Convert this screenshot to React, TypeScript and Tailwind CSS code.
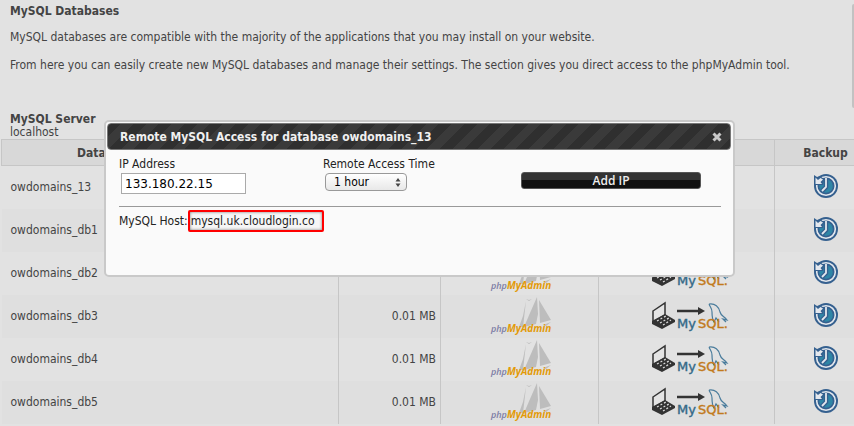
import { clsx } from "clsx";

const rows = [
  { name: "owdomains_13", size: "0.01 MB" },
  { name: "owdomains_db1", size: "0.01 MB" },
  { name: "owdomains_db2", size: "0.01 MB" },
  { name: "owdomains_db3", size: "0.01 MB" },
  { name: "owdomains_db4", size: "0.01 MB" },
  { name: "owdomains_db5", size: "0.01 MB" },
];

function PhpMyAdminLogo() {
  return (
    <svg width="64" height="40" viewBox="0 0 64 40" aria-label="phpMyAdmin">
      <g fill="#bdbdbd">
        <path d="M38 5 L35 20 L31 31 L35 31 Z" />
        <path d="M49 1 L50 18 L48 28 L36 31 L42 17 Z" />
        <path d="M51 4 L63 24 L52 27 Z" />
        <path d="M38 3l3 1 3-1-3 2z M55 29l8-3-5 4z" />
      </g>
      <text x="3" y="36" fontSize="9" fontStyle="italic" fontWeight="600" fontFamily="Open Sans, sans-serif" fill="#7c7ca4">
        php
      </text>
      <text x="19" y="36" fontSize="10" fontStyle="italic" fontWeight="700" fontFamily="Open Sans, sans-serif" fill="#e39a08">
        MyAdmin
      </text>
    </svg>
  );
}

function RemoteLogo() {
  return (
    <svg width="74" height="30" viewBox="0 0 74 30" className="overflow-visible" aria-label="Remote MySQL">
      <path d="M3 10 L15 2 V14 L3 21 Z" fill="#e4e4e4" stroke="#333" strokeWidth="1.500" />
      <path d="M2 20 L15 13 L25 19 V21 L12 28 L2 23 Z" fill="#333" />
      <path d="M7 20l9-5M10 22l9-5M13 24l8-5" stroke="#ddd" strokeWidth="1.200" strokeDasharray="2 2" />
      <path d="M27 10H49" stroke="#333" strokeWidth="2.500" />
      <path d="M48 6L55 10L48 14Z" fill="#333" />
      <path
        d="M59 3c6-1 10 3 11 8 1 4 4 4 7 8l-4-1 3 3M59 3c1 3 3 4 3 8s0 7 2 10l2-4 3 4"
        fill="none"
        stroke="#4a7c9c"
        strokeWidth="1.200"
      />
      <g fontSize="13" fontFamily="DejaVu Sans, sans-serif" strokeWidth="0.400">
        <text x="27" y="27" fill="#356a88" stroke="#356a88">
          My
        </text>
        <text x="48" y="27" fill="#c27a1c" stroke="#c27a1c">
          SQL.
        </text>
      </g>
    </svg>
  );
}

function BackupIcon() {
  return (
    <svg width="24" height="24" viewBox="0 0 24 24" aria-hidden="true">
      <circle cx="12" cy="12" r="12" fill="#35608f" />
      <circle cx="12" cy="12" r="9.300" fill="none" stroke="#e4e8ee" strokeWidth="1.600" />
      <circle cx="12" cy="12" r="6.800" fill="#2f86a6" />
      <path d="M12 4V13L8 17" fill="none" stroke="#35608f" strokeWidth="4.500" />
      <path d="M12 4V13L8 17" fill="none" stroke="#e4e8ee" strokeWidth="1.800" />
      <path d="M0 1L3 3L6 2L10 5L9 11H0Z" fill="#35608f" />
      <path d="M1.500 3.500V10H8L6.500 8L9 5.500L6.500 4L4 6Z" fill="#e4e8ee" />
    </svg>
  );
}

function RemoteAccessDialog() {
  return (
    <div
      role="dialog"
      aria-labelledby="dialog-title"
      className="absolute top-[120px] left-[104px] w-[631px] h-[157px] rounded-[5px] border-2 border-[#c9c9c9] bg-[#fafafa] text-[#222]"
    >
      <div className="mt-px mr-[2px] ml-px flex h-[27px] items-center justify-between rounded border border-[#777] bg-[repeating-linear-gradient(135deg,#2f2f2f_0px,#2f2f2f_9px,#3a3a3a_9px,#3a3a3a_18px)] pr-2 pl-3">
        <h2 id="dialog-title" className="font-bold text-[#f0f0f0]">
          Remote MySQL Access for database owdomains_13
        </h2>
        <button type="button" aria-label="Close">
          <svg width="10" height="10" viewBox="0 0 10 10">
            <path d="M1.500 1.500L8.500 8.500M8.500 1.500L1.500 8.500" stroke="#c8c8c8" strokeWidth="3" />
          </svg>
        </button>
      </div>

      <form className="pt-[6px] pr-3 pl-[13px]">
        <div className="flex border-b border-[#999] pb-3">
          <div className="w-[204px]">
            <label htmlFor="ip" className="block leading-4">
              IP Address
            </label>
            <input
              id="ip"
              type="text"
              defaultValue="133.180.22.15"
              className="mt-px ml-[2px] block h-[21px] w-[125px] border border-[#aaa] bg-white px-[3px] font-['DejaVu_Sans',sans-serif] text-[12px] text-black"
            />
          </div>
          <div className="flex-1">
            <label htmlFor="time" className="block leading-4">
              Remote Access Time
            </label>
            <span className="relative mt-px ml-[2px] block w-[82px]">
              <select
                id="time"
                className="block h-[18px] w-full appearance-none rounded border border-[#999] bg-linear-to-b from-white to-[#e8e8e8] pl-2 text-[12px] text-black"
              >
                <option>1 hour</option>
              </select>
              <svg width="6" height="9" viewBox="0 0 6 9" className="pointer-events-none absolute top-[5px] right-[6px]">
                <path d="M3 0L5.500 3.500H.5ZM3 9L5.500 5.500H.5Z" fill="#444" />
              </svg>
            </span>
          </div>
          <button
            type="button"
            className="mt-4 mr-5 h-[17px] w-[180px] rounded-[3px] border border-[#555] bg-linear-to-b from-[#333] from-50% to-[#111] to-50% font-['Open_Sans',sans-serif] leading-[14px] font-semibold text-[#eee]"
          >
            Add IP
          </button>
        </div>
        <div className="mt-[3px] flex items-center">
          <label htmlFor="host">MySQL Host:</label>
          <input
            id="host"
            type="text"
            readOnly
            defaultValue="mysql.uk.cloudlogin.co"
            className="h-[22px] w-[136px] rounded-xs border-2 border-[#f00] bg-[#f6f6f6] px-px shadow-[inset_0_0_3px_#777]"
          />
        </div>
      </form>
    </div>
  );
}

export default function App() {
  return (
    <main className="relative h-screen overflow-hidden bg-[#e2e2e2] font-['DejaVu_Sans_Condensed','DejaVu_Sans',sans-serif] text-[12px] leading-[14px] text-[#444]">
      <section className="px-[10px] pt-1">
        <h1 className="font-bold">MySQL Databases</h1>
        <p className="mt-3">
          MySQL databases are compatible with the majority of the applications that you may install on your website.
        </p>
        <p className="mt-[14px]">
          From here you can easily create new MySQL databases and manage their settings. The section gives you direct
          access to the phpMyAdmin tool.
        </p>
        <h2 className="mt-10 font-bold">MySQL Server</h2>
        <p className="leading-[13px]">localhost</p>
      </section>

      <table className="ml-px w-[calc(100%+22px)] table-fixed border-collapse">
        <colgroup>
          <col />
          <col className="w-[102px]" />
          <col className="w-[158px]" />
          <col className="w-[176px]" />
          <col className="w-[102px]" />
        </colgroup>
        <thead>
          <tr className="h-[26px] bg-[#d8d8d8]">
            <th className="border border-[#c6c6c6] pl-[75px] text-left">Data</th>
            <th className="border border-[#c6c6c6]" aria-label="Size" />
            <th className="border border-[#c6c6c6]" aria-label="phpMyAdmin" />
            <th className="border border-[#c6c6c6]" aria-label="Remote Access" />
            <th className="border border-[#c6c6c6]">Backup</th>
          </tr>
        </thead>
        <tbody>
          {rows.map((row, index) => (
            <tr key={row.name} className={clsx("h-[43px]", index % 2 === 0 ? "bg-[#e2e2e2]" : "bg-[#dfdfdf]")}>
              <td className="border-r border-[#c6c6c6] pl-[9px]">{row.name}</td>
              {/* the first rows sit behind the dialog */}
              <td className="border-r border-[#c6c6c6] pr-1 text-right">{index > 2 && row.size}</td>
              <td className="border-r border-[#c6c6c6]">
                <a href="#phpmyadmin" className="flex justify-center">
                  <PhpMyAdminLogo />
                </a>
              </td>
              <td className="border-r border-[#c6c6c6]">
                <a href="#remote" className="flex justify-center">
                  <RemoteLogo />
                </a>
              </td>
              <td className="pb-[3px]">
                <button type="button" aria-label={`Backup ${row.name}`} className="mx-auto block">
                  <BackupIcon />
                </button>
              </td>
            </tr>
          ))}
        </tbody>
      </table>

      <div className="absolute top-1 right-0 h-[104px] w-[2px] rounded-l bg-[#c2c2c2]" />

      <RemoteAccessDialog />
    </main>
  );
}
